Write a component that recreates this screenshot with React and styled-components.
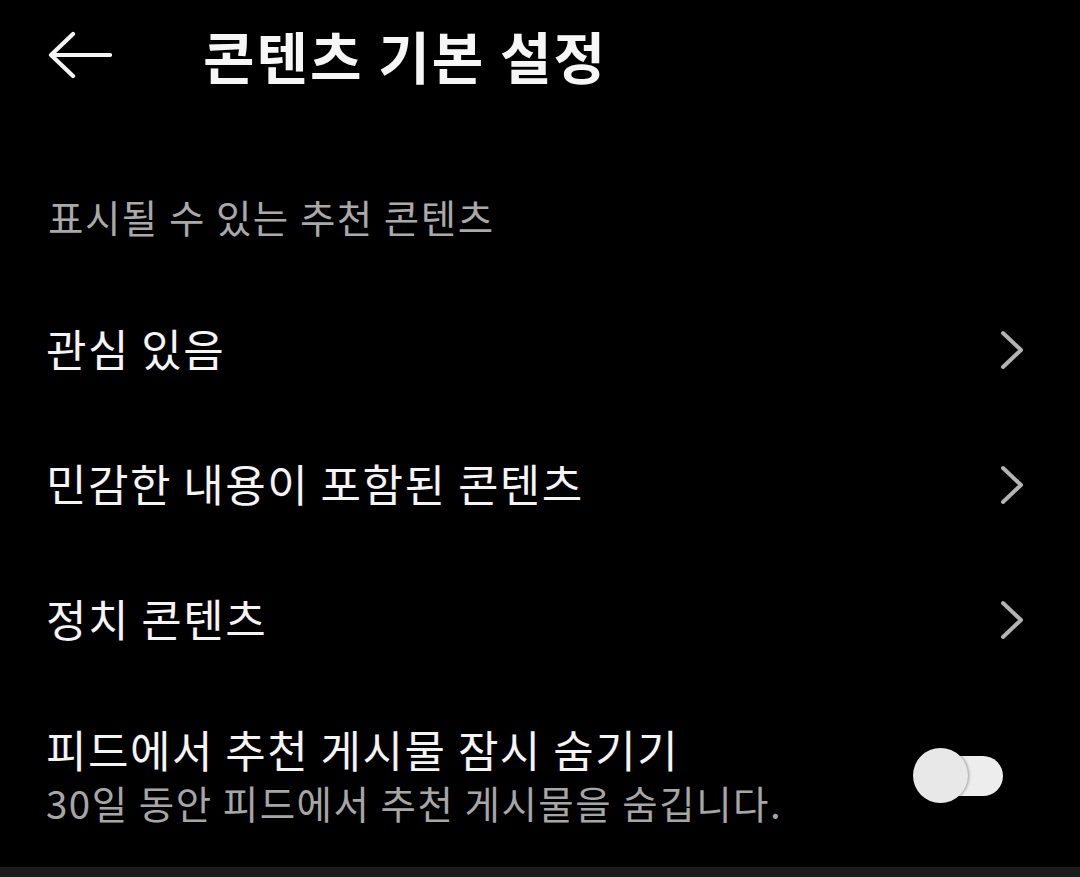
import styled, { createGlobalStyle } from 'styled-components'

const GlobalStyle = createGlobalStyle`
    html, body {
        margin: 0;
        padding: 0;
        background: #000;
    }
    body {
        font-family: "Noto Sans CJK KR", "Noto Sans", sans-serif;
        color: #f4f4f4;
    }
`

const Page = styled.div`
    width: 1080px;
    height: 877px;
    display: flex;
    flex-direction: column;
    background: #000;
    overflow: hidden;
`

const Header = styled.header`
    height: 110px;
    display: flex;
    align-items: center;
    padding: 0 48px;
    flex-shrink: 0;
`

const BackButton = styled.button`
    width: 155px;
    height: 60px;
    padding: 0;
    border: none;
    background: none;
    display: flex;
    align-items: center;
    cursor: pointer;
`

const Title = styled.h1`
    margin: 0;
    font-size: 56px;
    font-weight: 700;
    line-height: 60px;
    letter-spacing: 2px;
    color: #f6f6f6;
`

const SectionLabel = styled.div`
    padding: 81px 48px 41px;
    font-size: 38.5px;
    line-height: 50px;
    letter-spacing: 1.5px;
    color: #a9a9a9;
    flex-shrink: 0;
`

const Row = styled.div`
    height: ${(props) => props.tall ? '178px' : '135px'};
    display: flex;
    align-items: center;
    justify-content: space-between;
    padding: 0 ${(props) => props.tall ? '77px' : '56px'} 0 46px;
    flex-shrink: 0;
    cursor: pointer;
`

const RowText = styled.div`
    display: flex;
    flex-direction: column;
    margin-top: -4px;
`

const RowTitle = styled.span`
    font-size: 44px;
    line-height: 56px;
    letter-spacing: 1.5px;
    color: #f4f4f4;
`

const RowSub = styled.span`
    font-size: 38.5px;
    line-height: 50px;
    letter-spacing: 1.5px;
    color: #a6a6a6;
`

const Toggle = styled.div`
    position: relative;
    width: 90px;
    height: 56px;
`

const Track = styled.div`
    position: absolute;
    right: 0;
    top: 8px;
    width: 80px;
    height: 40px;
    border-radius: 20px;
    background: #ededed;
`

const Thumb = styled.div`
    position: absolute;
    left: 0;
    top: 0;
    width: 55px;
    height: 55px;
    border-radius: 50%;
    background: #e8e8e8;
    box-shadow: 1px 0 3px rgba(0, 0, 0, 0.35);
`

const Spacer = styled.div`
    flex: 1;
`

const BottomBar = styled.div`
    height: 10px;
    background: #1c1c1c;
    flex-shrink: 0;
`

function BackArrow() {
    return (
        <svg width="64" height="48" viewBox="0 0 64 48" fill="none">
            <path d="M3 24H62M25 3L3 24L25 45" stroke="#f4f4f4" strokeWidth="4.2" strokeLinecap="round" strokeLinejoin="round" />
        </svg>
    )
}

function Chevron() {
    return (
        <svg width="24" height="40" viewBox="0 0 24 40" fill="none">
            <path d="M3 3L21 20L3 37" stroke="#b3b3b3" strokeWidth="4" strokeLinecap="round" strokeLinejoin="round" />
        </svg>
    )
}

const items = ['관심 있음', '민감한 내용이 포함된 콘텐츠', '정치 콘텐츠']

export default function App() {
    return (
        <>
            <GlobalStyle />
            <Page>
                <Header>
                    <BackButton aria-label="뒤로">
                        <BackArrow />
                    </BackButton>
                    <Title>콘텐츠 기본 설정</Title>
                </Header>

                <SectionLabel>표시될 수 있는 추천 콘텐츠</SectionLabel>

                {items.map((item) => (
                    <Row key={item}>
                        <RowText>
                            <RowTitle>{item}</RowTitle>
                        </RowText>
                        <Chevron />
                    </Row>
                ))}

                <Row tall>
                    <RowText>
                        <RowTitle>피드에서 추천 게시물 잠시 숨기기</RowTitle>
                        <RowSub>30일 동안 피드에서 추천 게시물을 숨깁니다.</RowSub>
                    </RowText>
                    <Toggle>
                        <Track />
                        <Thumb />
                    </Toggle>
                </Row>

                <Spacer />
                <BottomBar />
            </Page>
        </>
    )
}
